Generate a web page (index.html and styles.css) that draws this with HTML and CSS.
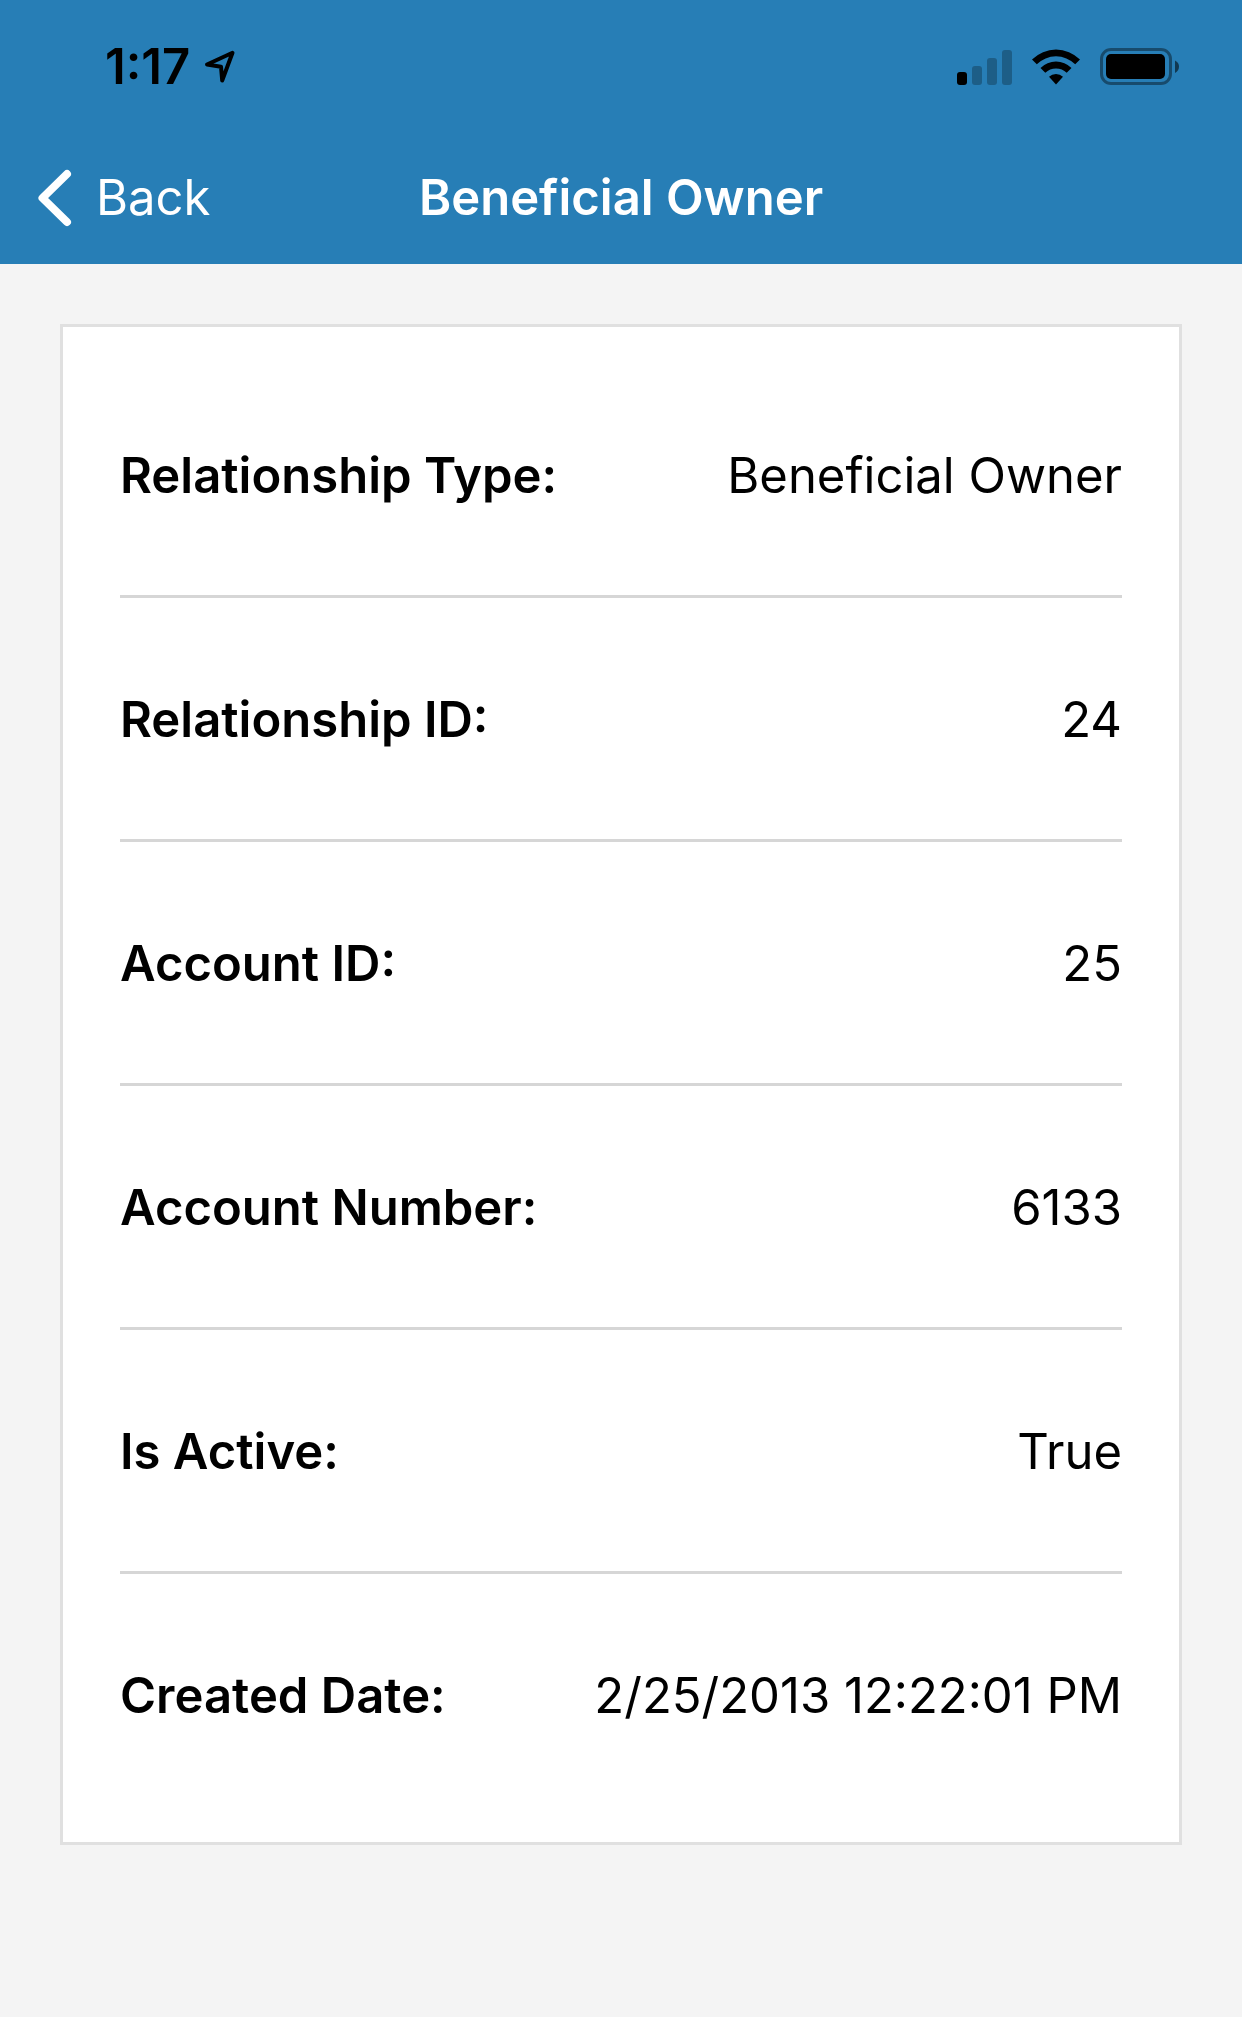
FILE: index.html
```html
<!DOCTYPE html>
<html lang="en">
<head>
<meta charset="utf-8">
<meta name="viewport" content="width=device-width, initial-scale=1">
<title>Beneficial Owner</title>
<link rel="stylesheet" href="styles.css">
</head>
<body>
<header class="header">
  <div class="status">
    <div class="status-left">
      <span class="time">1:17</span>
      <svg class="icon" width="32" height="34" viewBox="0 0 32 34" aria-hidden="true"><path d="M28.500 2.800 3 14.500 17 16.700 18.200 30.500Z" fill="none" stroke="#000" stroke-width="4" stroke-linejoin="round"/></svg>
    </div>
    <div class="status-right">
      <svg class="icon" width="55" height="36" viewBox="0 0 55 36" aria-hidden="true">
        <rect x="0" y="23" width="10" height="13" rx="3"/>
        <g opacity=".25"><rect x="15" y="17" width="10" height="19" rx="3"/><rect x="30" y="9" width="10" height="27" rx="3"/><rect x="45" y="1" width="10" height="35" rx="3"/></g>
      </svg>
      <svg class="icon" width="48" height="36" viewBox="0 0 48 36" aria-hidden="true">
        <path d="M0 10.500A34 34 0 0 1 48 10.500L43.200 15.300A27.200 27.200 0 0 0 4.800 15.300Z"/>
        <path d="M8.500 19A22 22 0 0 1 39.500 19L34.700 23.800A15.200 15.200 0 0 0 13.300 23.800Z"/>
        <path d="M17 27.700A10.500 10.500 0 0 1 31 27.700L24 35.500Z"/>
      </svg>
      <svg class="icon" width="80" height="38" viewBox="0 0 80 38" aria-hidden="true">
        <rect x="1.500" y="1.500" width="69" height="34" rx="9.500" fill="none" stroke="#000" stroke-opacity=".4" stroke-width="3"/>
        <rect x="6" y="6" width="59" height="25" rx="5"/>
        <path d="M75 12.500Q79 14.500 79 18.500T75 25Z" opacity=".55"/>
      </svg>
    </div>
  </div>
  <nav class="nav">
    <button class="back" type="button">
      <svg class="icon" width="34" height="58" viewBox="0 0 34 58" aria-hidden="true"><path d="M29 5 4.500 29 29 53" fill="none" stroke="#fff" stroke-width="8" stroke-linecap="round" stroke-linejoin="round"/></svg>
      Back
    </button>
    <h1 class="title">Beneficial Owner</h1>
  </nav>
</header>
<main class="main">
  <dl class="card">
    <div class="row"><dt>Relationship Type:</dt><dd>Beneficial Owner</dd></div>
    <div class="row"><dt>Relationship ID:</dt><dd>24</dd></div>
    <div class="row"><dt>Account ID:</dt><dd>25</dd></div>
    <div class="row"><dt>Account Number:</dt><dd>6133</dd></div>
    <div class="row"><dt>Is Active:</dt><dd>True</dd></div>
    <div class="row"><dt>Created Date:</dt><dd>2/25/2013 12:22:01 PM</dd></div>
  </dl>
</main>
</body>
</html>
```
FILE: styles.css
```css
* { box-sizing: border-box; }

body {
  margin: 0;
  background: #f4f4f4;
  color: #000;
  font-family: Inter, "Liberation Sans", sans-serif;
  font-size: 49px;
  line-height: 60px;
}

.icon { display: block; flex: none; }

.header { background: #277eb6; }

.status {
  display: flex;
  justify-content: space-between;
  align-items: center;
  padding: 37px 62px 35px 105px;
}

.status-left { display: flex; align-items: center; gap: 14px; }
.status-right { display: flex; align-items: center; gap: 20px; }

.time { font-weight: 600; }

.nav {
  display: grid;
  grid-template-columns: 1fr auto 1fr;
  align-items: center;
  height: 132px;
  padding: 0 38px;
}

.back {
  display: flex;
  align-items: center;
  gap: 24px;
  justify-self: start;
  padding: 0;
  border: 0;
  background: none;
  color: #fff;
  font: inherit;
}

.title {
  margin: 0;
  color: #fff;
  font-size: 49px;
  font-weight: 600;
}

.main { padding: 60px; }

.card {
  margin: 0;
  padding: 27px 57px;
  border: 3px solid #e0e0e0;
  background: #fff;
}

.row {
  display: flex;
  justify-content: space-between;
  align-items: center;
  padding: 92px 0 89px;
}

.row + .row { border-top: 3px solid #d6d6d6; }

.row dt { font-weight: 600; }
.row dd { margin: 0; text-align: right; }
```
